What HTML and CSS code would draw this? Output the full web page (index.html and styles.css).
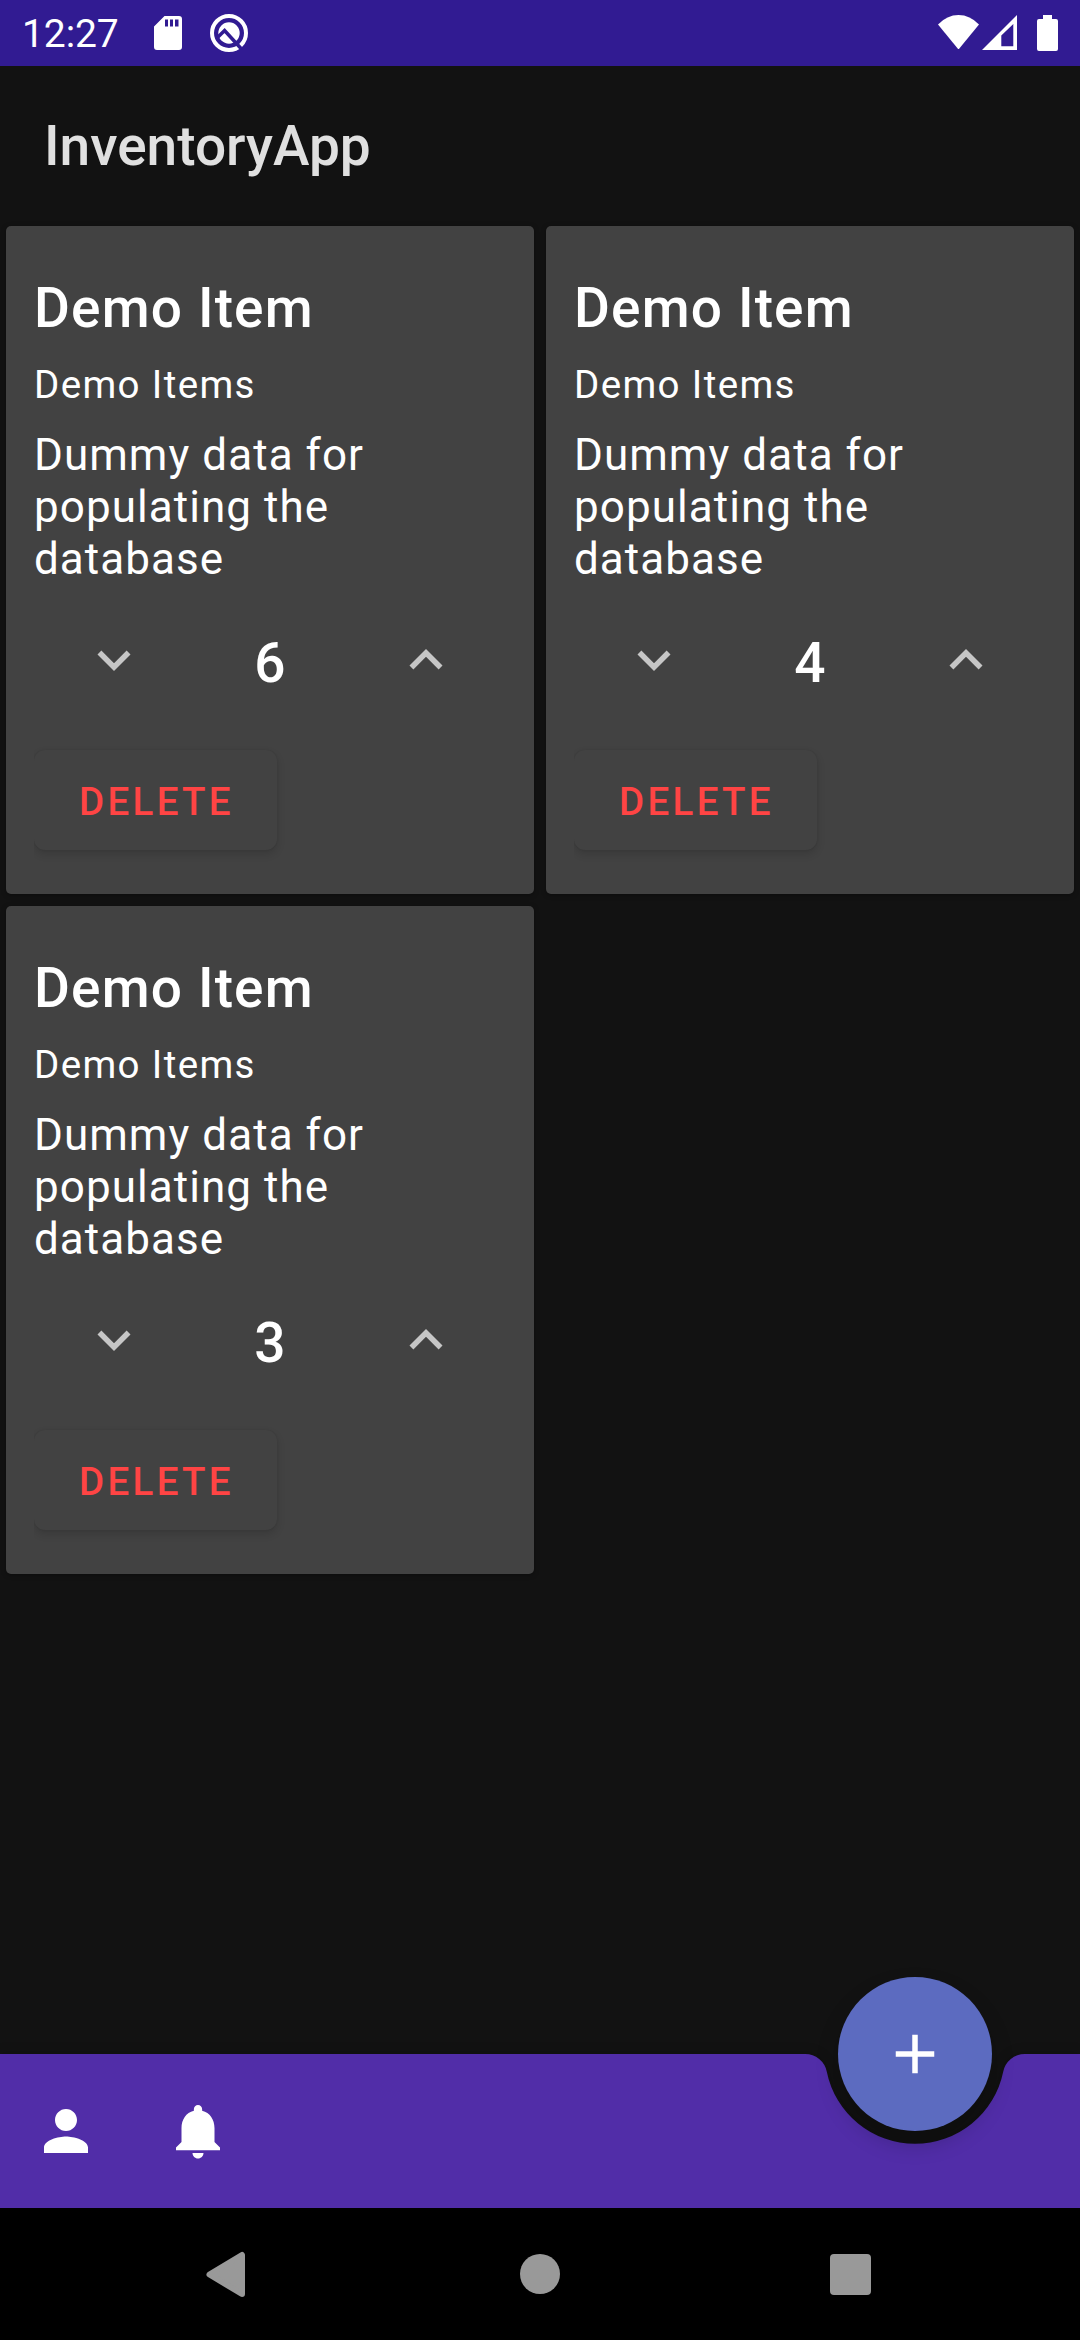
FILE: index.html
```html
<!DOCTYPE html>
<html lang="en">
<head>
<meta charset="utf-8">
<title>InventoryApp</title>
<link rel="stylesheet" href="styles.css">
</head>
<body>
<svg width="0" height="0" class="defs" aria-hidden="true">
  <symbol id="down" viewBox="0 0 24 24"><path d="M16.59 8.59L12 13.17 7.41 8.59 6 10l6 6 6-6z"/></symbol>
  <symbol id="up" viewBox="0 0 24 24"><path d="M12 8l-6 6 1.41 1.41L12 10.83l4.59 4.58L18 14z"/></symbol>
</svg>
<div class="screen">
  <header class="status">
    <span class="time">12:27</span>
    <svg class="sd" viewBox="0 0 28 34"><path fill-rule="evenodd" d="M10.500 0H25a3 3 0 0 1 3 3V31a3 3 0 0 1-3 3H3a3 3 0 0 1-3-3V10.500zM11 3.500V10.500H14V3.500zM16 3.500V10.500H19V3.500zM21 3.500V10.500H24.500V3.500z"/></svg>
    <svg class="q" viewBox="0 0 38 38"><circle cx="19" cy="19" r="17" fill="none" stroke="#fff" stroke-width="4"/><circle cx="19" cy="19" r="10.700"/><path d="M8 23L14.600 16.500L31 34.500" fill="none" stroke="#311b92" stroke-width="3.500"/></svg>
    <span class="spacer"></span>
    <svg class="wifi" viewBox="0 0 41 34"><path d="M0 9.500Q9 0 20.500 0T41 9.500L20.500 34.500z"/></svg>
    <svg class="signal" viewBox="0 0 35 35"><path fill-rule="evenodd" d="M0 35L35 0V35zM19.300 20.500V31.300H31.300V9z"/></svg>
    <svg class="battery" viewBox="0 0 21 36"><path d="M6 0H15V4H19a2 2 0 0 1 2 2V34a2 2 0 0 1-2 2H2a2 2 0 0 1-2-2V6a2 2 0 0 1 2-2H6z"/></svg>
  </header>
  <div class="appbar"><h1>InventoryApp</h1></div>
  <main class="grid">
    <article class="card">
      <h2>Demo Item</h2>
      <p class="kind">Demo Items</p>
      <p class="desc">Dummy data for populating the database</p>
      <div class="stepper"><svg><use href="#down"/></svg><span>6</span><svg><use href="#up"/></svg></div>
      <div class="actions"><button class="delete">DELETE</button></div>
    </article>
    <article class="card">
      <h2>Demo Item</h2>
      <p class="kind">Demo Items</p>
      <p class="desc">Dummy data for populating the database</p>
      <div class="stepper"><svg><use href="#down"/></svg><span>4</span><svg><use href="#up"/></svg></div>
      <div class="actions"><button class="delete">DELETE</button></div>
    </article>
    <article class="card">
      <h2>Demo Item</h2>
      <p class="kind">Demo Items</p>
      <p class="desc">Dummy data for populating the database</p>
      <div class="stepper"><svg><use href="#down"/></svg><span>3</span><svg><use href="#up"/></svg></div>
      <div class="actions"><button class="delete">DELETE</button></div>
    </article>
  </main>
  <footer class="bottombar">
    <svg class="barshape" viewBox="0 0 1080 154"><path d="M0 0H805.200A22 22 0 0 1 826.800 17.700A90 90 0 0 0 1003.200 17.700A22 22 0 0 1 1024.800 0H1080V154H0z"/></svg>
    <svg class="action" viewBox="0 0 24 24"><path d="M12 12c2.210 0 4-1.790 4-4s-1.790-4-4-4-4 1.790-4 4 1.790 4 4 4zm0 2c-2.670 0-8 1.340-8 4v2h16v-2c0-2.660-5.330-4-8-4z"/></svg>
    <svg class="action" viewBox="0 0 24 24"><path d="M12 22c1.100 0 2-.9 2-2h-4c0 1.100.89 2 2 2zm6-6v-5c0-3.070-1.640-5.640-4.500-6.320V4c0-.83-.67-1.500-1.500-1.500s-1.500.67-1.500 1.500v.68C7.630 5.360 6 7.920 6 11v5l-2 2v1h16v-1l-2-2z"/></svg>
    <button class="fab" aria-label="Add"><svg viewBox="0 0 24 24"><path d="M19 13h-6v6h-2v-6H5v-2h6V5h2v6h6z"/></svg></button>
  </footer>
  <nav class="sysnav">
    <svg viewBox="0 0 48 48"><path d="M4.500 24.500L37 5V44z" stroke="#999" stroke-width="6" stroke-linejoin="round"/></svg>
    <svg viewBox="0 0 48 48"><circle cx="24" cy="24" r="20"/></svg>
    <svg viewBox="0 0 48 48"><rect x="3" y="4" width="41" height="41" rx="4"/></svg>
  </nav>
</div>
</body>
</html>
```
FILE: styles.css
```css
* { box-sizing: border-box; }
body { margin: 0; background: #121212; font-family: Roboto, sans-serif; color: #fff; }
h1, h2, p { margin: 0; }
svg { display: block; fill: currentColor; flex: none; }
button { border: 0; font: inherit; }
.defs { position: absolute; }
.screen { width: 1080px; height: 2340px; display: flex; flex-direction: column; overflow: hidden; }

.status { height: 66px; flex: none; background: #311b92; display: flex; align-items: flex-start; padding: 0 22px; }
.time { width: 132px; font-size: 39px; line-height: 46px; padding-top: 11px; letter-spacing: -.1px; }
.sd { width: 28px; height: 34px; margin-top: 16px; }
.q { width: 38px; height: 38px; margin: 14px 0 0 28px; }
.spacer { flex: 1; }
.wifi { width: 41px; height: 34px; margin-top: 15px; }
.signal { width: 35px; height: 35px; margin: 15px 0 0 3px; }
.battery { width: 21px; height: 36px; margin: 15px 0 0 20px; }

.appbar { height: 154px; flex: none; padding: 48px 44px 0; }
h1 { font-size: 55px; line-height: 64px; font-weight: 500; color: #e0e0e0; }

.grid { flex: 1; display: grid; grid-template-columns: 528px 528px; grid-auto-rows: 668px; gap: 12px; padding: 6px; align-content: start; }
.card { background: #424242; border-radius: 5px; padding: 50px 28px 0; box-shadow: 0 1px 5px rgba(0,0,0,.35); }
h2 { font-size: 55px; line-height: 64px; font-weight: 500; letter-spacing: 1.15px; }
.kind { margin-top: 22px; font-size: 38.5px; line-height: 46px; letter-spacing: 1.38px; }
.desc { margin-top: 21px; width: 400px; font-size: 44px; line-height: 52px; letter-spacing: 1.05px; }
.stepper { margin-top: 42px; height: 66px; display: grid; grid-template-columns: repeat(3, 156px); justify-content: center; justify-items: center; }
.stepper svg { width: 66px; height: 66px; color: #c6c6c6; }
.stepper span { font-size: 55px; line-height: 64px; padding-top: 4px; font-weight: 500; }
.actions { margin-top: 48px; height: 130px; padding-top: 9px; overflow: hidden; }
.delete { display: block; height: 100px; width: 243px; border-radius: 11px; background: #424242; color: #ff4444; font-size: 38.5px; font-weight: 500; letter-spacing: 3.3px; padding: 2px 0 0 2px; box-shadow: 0 4px 8px rgba(0,0,0,.14), 0 0 2px rgba(0,0,0,.1); }

.bottombar { height: 154px; flex: none; position: relative; display: flex; align-items: center; gap: 66px; padding: 0 33px; }
.barshape { position: absolute; inset: 0; width: 1080px; height: 154px; color: #512da8; overflow: visible; filter: drop-shadow(0 0 6px rgba(0,0,0,.2)); }
.action { position: relative; width: 66px; height: 66px; }
.fab { position: absolute; left: 838px; top: -77px; width: 154px; height: 154px; border-radius: 50%; background: #5c6bc0; color: #fff; display: grid; place-items: center; padding: 0; box-shadow: 0 12px 22px rgba(0,0,0,.22); }
.fab svg { width: 66px; height: 66px; }

.sysnav { height: 132px; flex: none; background: #000; display: flex; justify-content: space-between; align-items: center; padding: 0 205px 0 205px; color: #999; }
.sysnav svg { width: 48px; height: 48px; }
```
